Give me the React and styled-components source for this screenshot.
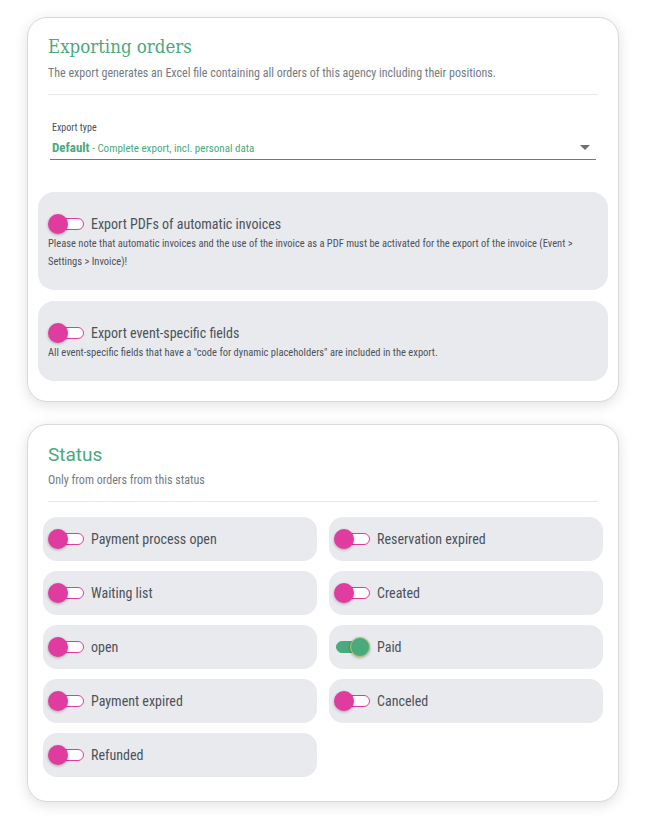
import React from 'react';
import styled, { createGlobalStyle } from 'styled-components';

const GlobalStyle = createGlobalStyle`
    body {
        margin: 0;
        background: #ffffff;
        font-family: "Roboto Condensed", "Liberation Sans Narrow", Roboto, sans-serif;
        color: #555c66;
    }
`

const GREEN = '#4aa97d';
const PINK = '#e03b9f';

const statuses = [
    { label: 'Payment process open', on: false },
    { label: 'Reservation expired', on: false },
    { label: 'Waiting list', on: false },
    { label: 'Created', on: false },
    { label: 'open', on: false },
    { label: 'Paid', on: true },
    { label: 'Payment expired', on: false },
    { label: 'Canceled', on: false },
    { label: 'Refunded', on: false },
];

const Toggle = ({ on }) => (
    <Switch>
        <Track on={on ? 1 : 0} />
        <Knob on={on ? 1 : 0} />
    </Switch>
)

export default function App() {
    return (
        <>
            <GlobalStyle />
            <Page>
                <Card>
                    <SlabTitle>Exporting orders</SlabTitle>
                    <Subtitle>The export generates an Excel file containing all orders of this agency including their positions.</Subtitle>
                    <Divider />
                    <Field>
                        <FieldLabel>Export type</FieldLabel>
                        <SelectRow>
                            <Value><b>Default</b> - Complete export, incl. personal data</Value>
                            <Caret />
                        </SelectRow>
                    </Field>
                    <Panels>
                        <Panel>
                            <OptionRow>
                                <Toggle on={false} />
                                <OptionLabel>Export PDFs of automatic invoices</OptionLabel>
                            </OptionRow>
                            <Note>Please note that automatic invoices and the use of the invoice as a PDF must be activated for the export of the invoice (Event &gt; Settings &gt; Invoice)!</Note>
                        </Panel>
                        <Panel>
                            <OptionRow>
                                <Toggle on={false} />
                                <OptionLabel>Export event-specific fields</OptionLabel>
                            </OptionRow>
                            <Note>All event-specific fields that have a "code for dynamic placeholders" are included in the export.</Note>
                        </Panel>
                    </Panels>
                </Card>
                <Card bottom>
                    <SansTitle>Status</SansTitle>
                    <Subtitle>Only from orders from this status</Subtitle>
                    <Divider />
                    <StatusGrid>
                        {statuses.map((s) => (
                            <StatusItem key={s.label}>
                                <Toggle on={s.on} />
                                <OptionLabel>{s.label}</OptionLabel>
                            </StatusItem>
                        ))}
                    </StatusGrid>
                </Card>
            </Page>
        </>
    )
}

const Page = styled.div`
    padding: 17px 27px 16px 27px;
    display: flex;
    flex-direction: column;
    gap: 22px;
`

const Card = styled.section`
    background: #fff;
    border: 1px solid #d9d9d9;
    border-radius: 20px;
    box-shadow: 0 3px 14px rgba(0, 0, 0, 0.12);
    padding: ${p => p.bottom ? '17px 20px 24px 20px' : '15px 20px 20px 20px'};
`

const SlabTitle = styled.h2`
    margin: 0;
    font-family: "Roboto Slab", "DejaVu Serif", serif;
    font-stretch: condensed;
    font-weight: 400;
    font-size: 18.5px;
    line-height: 28px;
    color: ${GREEN};
`

const SansTitle = styled.h2`
    margin: 0;
    font-family: Roboto, sans-serif;
    font-weight: 400;
    font-size: 19px;
    line-height: 26px;
    color: ${GREEN};
`

const Subtitle = styled.p`
    margin: 4px 0 0 0;
    font-size: 12px;
    line-height: 16px;
    color: #747b84;
`

const Divider = styled.hr`
    border: none;
    border-top: 1px solid #e6e7ea;
    margin: 13px 0 0 0;
`

const Field = styled.div`
    margin: 26px 2px 0 2px;
    border-bottom: 1px solid #737880;
`

const FieldLabel = styled.div`
    font-size: 10px;
    line-height: 14px;
    color: #4a4f56;
    padding-left: 2px;
`

const SelectRow = styled.div`
    display: flex;
    align-items: center;
    justify-content: space-between;
    height: 24px;
    padding: 0 6px 0 2px;
`

const Value = styled.div`
    font-size: 11px;
    color: ${GREEN};
    b {
        font-size: 13px;
        font-weight: 700;
    }
`

const Caret = styled.div`
    width: 0;
    height: 0;
    border-left: 5px solid transparent;
    border-right: 5px solid transparent;
    border-top: 5px solid #6f6f6f;
`

const Panels = styled.div`
    margin: 32px -10px 0 -10px;
    display: flex;
    flex-direction: column;
    gap: 11px;
`

const Panel = styled.div`
    background: #e9eaee;
    border-radius: 16px;
    padding: 21px 10px 19px 10px;
`

const OptionRow = styled.div`
    display: flex;
    align-items: center;
    gap: 7px;
    height: 22px;
`

const OptionLabel = styled.span`
    font-size: 14px;
    color: #4b525b;
`

const Note = styled.p`
    margin: 0;
    font-size: 10.5px;
    line-height: 18px;
    color: #4b525b;
`

const StatusGrid = styled.div`
    margin: 15px -5px 0 -5px;
    display: grid;
    grid-template-columns: 1fr 1fr;
    column-gap: 12px;
    row-gap: 10px;
`

const StatusItem = styled.div`
    background: #e9eaee;
    border-radius: 14px;
    height: 44px;
    padding: 0 5px;
    display: flex;
    align-items: center;
    gap: 7px;
`

const Switch = styled.div`
    position: relative;
    width: 36px;
    height: 20px;
    flex-shrink: 0;
`

const Track = styled.div`
    position: absolute;
    left: 2px;
    right: 0;
    top: 4px;
    height: 12px;
    border-radius: 7px;
    box-sizing: border-box;
    background: ${p => p.on ? GREEN : '#fff'};
    border: 1px solid ${p => p.on ? GREEN : PINK};
`

const Knob = styled.div`
    position: absolute;
    top: 0;
    left: ${p => p.on ? '16px' : '0'};
    width: 20px;
    height: 20px;
    border-radius: 50%;
    box-sizing: border-box;
    background: ${p => p.on ? GREEN : PINK};
    border: ${p => p.on ? '1px solid #b8c96a' : 'none'};
    box-shadow: 0 1px 3px rgba(0, 0, 0, 0.3);
`
